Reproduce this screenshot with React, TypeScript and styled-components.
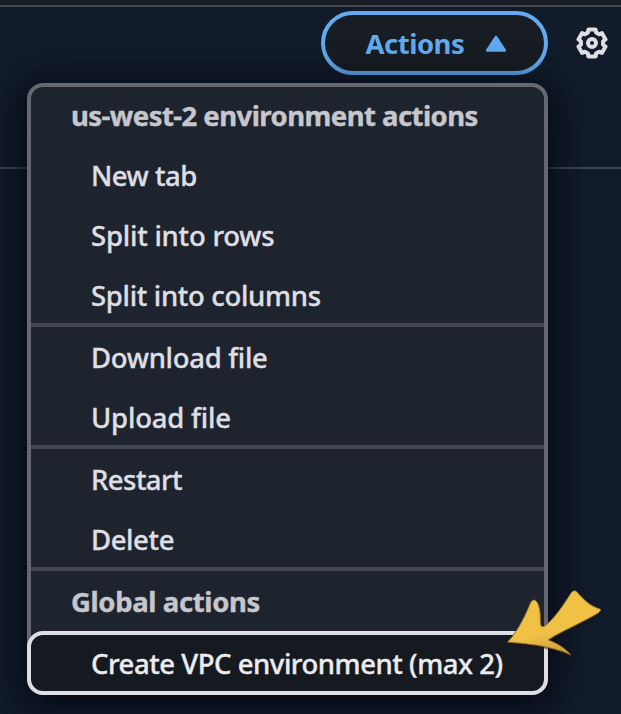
import React from 'react';
import styled, { createGlobalStyle } from 'styled-components';

const GlobalStyle = createGlobalStyle`
  * { box-sizing: border-box; }
  body {
    margin: 0;
    background: #101a28;
    font-family: "Noto Sans", "Open Sans", sans-serif;
  }
`;

const Page = styled.main`
  width: 621px;
  height: 714px;
  overflow: hidden;
  background: #111b29;
`;

const TopStrip = styled.div`
  height: 7px;
  background: #181d24;
  border-bottom: 2px solid #424650;
`;

const Toolbar = styled.header`
  height: 162px;
  padding: 4px 13px 0 0;
  display: flex;
  justify-content: flex-end;
  align-items: flex-start;
  gap: 28px;
  border-bottom: 2px solid #3f4550;
`;

const ActionsButton = styled.button`
  width: 227px;
  height: 64px;
  padding: 1px 37px 0 40.5px;
  display: flex;
  align-items: center;
  justify-content: space-between;
  border: 4px solid #62abf0;
  border-radius: 32px;
  background: #171d23;
  color: #62abf0;
  font: 700 27.5px/36px "Noto Sans", sans-serif;
  letter-spacing: -0.5px;
`;

const Caret = styled.svg`
  width: 22px;
  height: 18px;
  display: block;
`;

const GearButton = styled.button`
  width: 32px;
  height: 64px;
  padding: 0;
  border: 0;
  background: none;
  display: flex;
  align-items: center;
`;

const MenuAnchor = styled.div`
  position: relative;
  margin: -86px 0 0 27px;
  width: 521px;
`;

const Menu = styled.div`
  height: 612px;
  border: 4px solid #656871;
  border-radius: 16px;
  background: #1e242d;
  box-shadow: 0 6px 36px 6px rgba(0, 2, 14, 0.72);
`;

const GroupTitle = styled.div<{ $spacing: number }>`
  height: 60px;
  padding-left: 40px;
  color: #c6c6cd;
  font-size: 27.5px;
  font-weight: 700;
  line-height: 58px;
  letter-spacing: ${(p) => p.$spacing}px;
  white-space: nowrap;
  -webkit-text-stroke: 0.4px currentColor;
`;

const Item = styled.div<{ $spacing: number }>`
  height: 60px;
  padding-left: 60px;
  color: #dedee3;
  font-size: 27.5px;
  font-weight: 500;
  line-height: 58px;
  letter-spacing: ${(p) => p.$spacing}px;
  white-space: nowrap;
  -webkit-text-stroke: 0.35px currentColor;
`;

const ActiveItem = styled(Item)`
  height: 64px;
  margin: -2px -4px 0;
  line-height: 58px;
  border: 4px solid #dedee3;
  border-radius: 16px;
  background: #151a20;
  color: #ebebf0;
`;

const Divider = styled.div`
  height: 4px;
  margin: -4px 0 2px;
  background: #424650;
`;

const Pointer = styled.svg`
  position: absolute;
  left: 473px;
  top: 500px;
  width: 108px;
  height: 84px;
`;

const gearPath = (() => {
  const points: string[] = [];
  for (let i = 0; i < 6; i++) {
    const base = i * 60 - 90;
    for (const [offset, r] of [[-21, 11.2], [-15, 14], [15, 14], [21, 11.2]]) {
      const a = ((base + offset) * Math.PI) / 180;
      points.push(`${(16 + r * Math.cos(a)).toFixed(2)} ${(16 + r * Math.sin(a)).toFixed(2)}`);
    }
  }
  return `M${points.join('L')}Z`;
})();

type Entry = { label: string; spacing: number };

const groups: Entry[][] = [
  [
    { label: 'New tab', spacing: -0.5 },
    { label: 'Split into rows', spacing: -0.22 },
    { label: 'Split into columns', spacing: -0.32 },
  ],
  [
    { label: 'Download file', spacing: -0.3 },
    { label: 'Upload file', spacing: -0.2 },
  ],
  [
    { label: 'Restart', spacing: -0.55 },
    { label: 'Delete', spacing: -0.4 },
  ],
];

export default function App() {
  return (
    <Page>
      <GlobalStyle />
      <TopStrip />
      <Toolbar>
        <ActionsButton>
          Actions
          <Caret viewBox="0 0 22 18">
            <path d="M11 2 19.8 15.5H2.2Z" fill="#62abf0" stroke="#62abf0" strokeWidth="2.6" strokeLinejoin="round" />
          </Caret>
        </ActionsButton>
        <GearButton aria-label="Settings">
          <svg width="32" height="32" viewBox="0 0 32 32" fill="none" stroke="#dedee3" strokeWidth="4" strokeLinejoin="round">
            <path d={gearPath} />
            <circle cx="16" cy="16" r="4" />
          </svg>
        </GearButton>
      </Toolbar>
      <MenuAnchor>
        <Menu>
          <GroupTitle $spacing={-0.55}>us-west-2 environment actions</GroupTitle>
          {groups.map((group) => (
            <React.Fragment key={group[0].label}>
              {group.map((entry) => (
                <Item key={entry.label} $spacing={entry.spacing}>{entry.label}</Item>
              ))}
              <Divider />
            </React.Fragment>
          ))}
          <GroupTitle $spacing={-0.38}>Global actions</GroupTitle>
          <ActiveItem $spacing={-0.46}>Create VPC environment (max 2)</ActiveItem>
        </Menu>
        <Pointer viewBox="500 583 108 84">
          <defs>
            <filter id="pointerShadow" x="-10%" y="-10%" width="120%" height="120%">
              <feDropShadow dx="0.5" dy="1" stdDeviation="1" floodColor="#17150f" floodOpacity="0.9" />
            </filter>
            <linearGradient id="pointerFill" x1="0.35" y1="0.2" x2="0.6" y2="1">
              <stop offset="0.55" stopColor="#f0c145" />
              <stop offset="1" stopColor="#c9993a" />
            </linearGradient>
          </defs>
          <path
            d="M507.5 642 C515 635 523 621 530 604 Q533 597 537 602 C541 609 540 617 540.5 624 Q541 628 545 626 C555 618 564 604 571 593 Q574 589 577 592 C584 600 590 606 600 609 Q602 610 598 613 C584 622 563 630 548 640 C557 643 565 648 571 655 C561 650 548 647 536 645 Q521 643 507.5 642Z"
            fill="url(#pointerFill)"
            stroke="#8b6c2c"
            strokeWidth="0.8"
            strokeLinejoin="round"
            filter="url(#pointerShadow)"
          />
        </Pointer>
      </MenuAnchor>
    </Page>
  );
}
